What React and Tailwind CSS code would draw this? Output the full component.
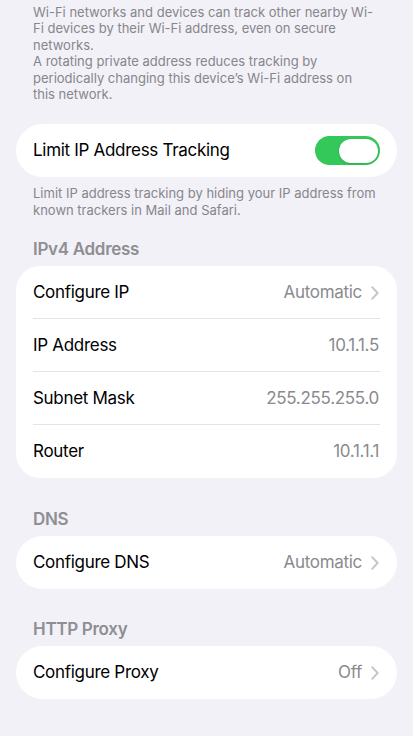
import { useState } from 'react';

function Chevron() {
  return (
    <svg width="8" height="14" viewBox="0 0 8 14" fill="none" className="ml-[9px]">
      <path d="M1.2 1.2 L6.6 7 L1.2 12.8" stroke="#c4c4c7" strokeWidth="1.9" strokeLinecap="round" strokeLinejoin="round" />
    </svg>
  );
}

function Row({ label, value, chevron, last }) {
  return (
    <div className="relative flex h-[53px] items-center justify-between pl-[17px] pr-[18px]">
      <span className="text-[17px] tracking-[-0.3px] text-black">{label}</span>
      <span className="flex items-center text-[17px] tracking-[-0.3px] text-[#8a8a8e]">
        {value}
        {chevron && <Chevron />}
      </span>
      {!last && <div className="absolute bottom-0 left-[17px] right-[17px] h-px bg-[#e4e4e7]" />}
    </div>
  );
}

function Toggle() {
  const [on, setOn] = useState(true);
  return (
    <button
      onClick={() => setOn(!on)}
      className={`flex h-[29px] w-[65px] items-center rounded-full p-[2.5px] ${on ? 'justify-end bg-[#34c759]' : 'justify-start bg-[#e5e5ea]'}`}
    >
      <span className="h-[24px] w-[39px] rounded-full bg-white shadow-sm" />
    </button>
  );
}

function Header({ children }) {
  return <div className="px-[33px] text-[17px] font-semibold leading-[20px] tracking-[-0.3px] text-[#8e8e93]">{children}</div>;
}

export default function App() {
  return (
    <div
      className="min-h-[736px] w-[413px] overflow-hidden bg-[#f2f1f7]"
      style={{ fontFamily: 'Inter, "Noto Sans", sans-serif' }}
    >
      {/* private address explanation, scrolled partly off the top */}
      <div className="mt-[4px] px-[33px] text-[13px] leading-[16.4px] text-[#86868b]">
        <div className="whitespace-nowrap">Wi-Fi networks and devices can track other nearby Wi-</div>
        <div className="whitespace-nowrap">Fi devices by their Wi-Fi address, even on secure</div>
        <div className="whitespace-nowrap">networks.</div>
        <div className="whitespace-nowrap">A rotating private address reduces tracking by</div>
        <div className="whitespace-nowrap">periodically changing this device’s Wi-Fi address on</div>
        <div className="whitespace-nowrap">this network.</div>
      </div>

      <div className="mx-4 mt-[22px] flex h-[53px] items-center justify-between rounded-[27px] bg-white pl-[17px] pr-[17px]">
        <span className="text-[17px] tracking-[-0.3px] text-black">Limit IP Address Tracking</span>
        <Toggle />
      </div>

      <div className="mt-[8px] px-[33px] text-[13px] leading-[16.5px] text-[#86868b]">
        <div className="whitespace-nowrap">Limit IP address tracking by hiding your IP address from</div>
        <div className="whitespace-nowrap">known trackers in Mail and Safari.</div>
      </div>

      <div className="mt-[21px]">
        <Header>IPv4 Address</Header>
      </div>
      <div className="mx-4 mt-[7px] rounded-[24px] bg-white">
        <Row label="Configure IP" value="Automatic" chevron />
        <Row label="IP Address" value="10.1.1.5" />
        <Row label="Subnet Mask" value="255.255.255.0" />
        <Row label="Router" value="10.1.1.1" last />
      </div>

      <div className="mt-[31px]">
        <Header>DNS</Header>
      </div>
      <div className="mx-4 mt-[7px] rounded-[27px] bg-white">
        <Row label="Configure DNS" value="Automatic" chevron last />
      </div>

      <div className="mt-[30px]">
        <Header>HTTP Proxy</Header>
      </div>
      <div className="mx-4 mt-[7px] rounded-[27px] bg-white">
        <Row label="Configure Proxy" value="Off" chevron last />
      </div>
    </div>
  );
}
